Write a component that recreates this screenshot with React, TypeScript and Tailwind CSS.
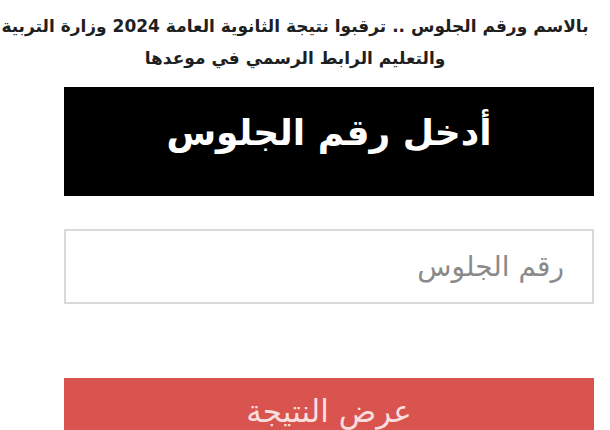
export default function App() {
  return (
    <div
      dir="rtl"
      className="w-[610px] h-[430px] overflow-hidden bg-white"
      style={{ fontFamily: '"DejaVu Sans", "Noto Sans", sans-serif' }}
    >
      <h1 className="whitespace-nowrap pt-[10px] pr-[20px] text-center text-[17px] font-bold leading-[32px] text-[#1f1f1f]">
        بالاسم ورقم الجلوس .. ترقبوا نتيجة الثانوية العامة 2024 وزارة التربية
        <br />
        والتعليم الرابط الرسمي في موعدها
      </h1>

      <div className="mr-[16px] ml-[64px] mt-[13px] flex flex-col">
        <div className="flex h-[109px] items-center justify-center bg-black pb-[18px] text-[36px] font-bold text-white">
          أدخل رقم الجلوس
        </div>

        <input
          type="text"
          placeholder="رقم الجلوس"
          className="mt-[33px] h-[75px] w-full border-2 border-[#d9d9d9] bg-white px-[28px] text-right text-[28px] text-[#555] outline-none placeholder:text-[#8a8a8a]"
        />

        <button
          type="button"
          className="mt-[74px] h-[80px] w-full bg-[#d9534f] pb-[14px] text-[31px] text-[#f8dede]"
        >
          عرض النتيجة
        </button>
      </div>
    </div>
  )
}
